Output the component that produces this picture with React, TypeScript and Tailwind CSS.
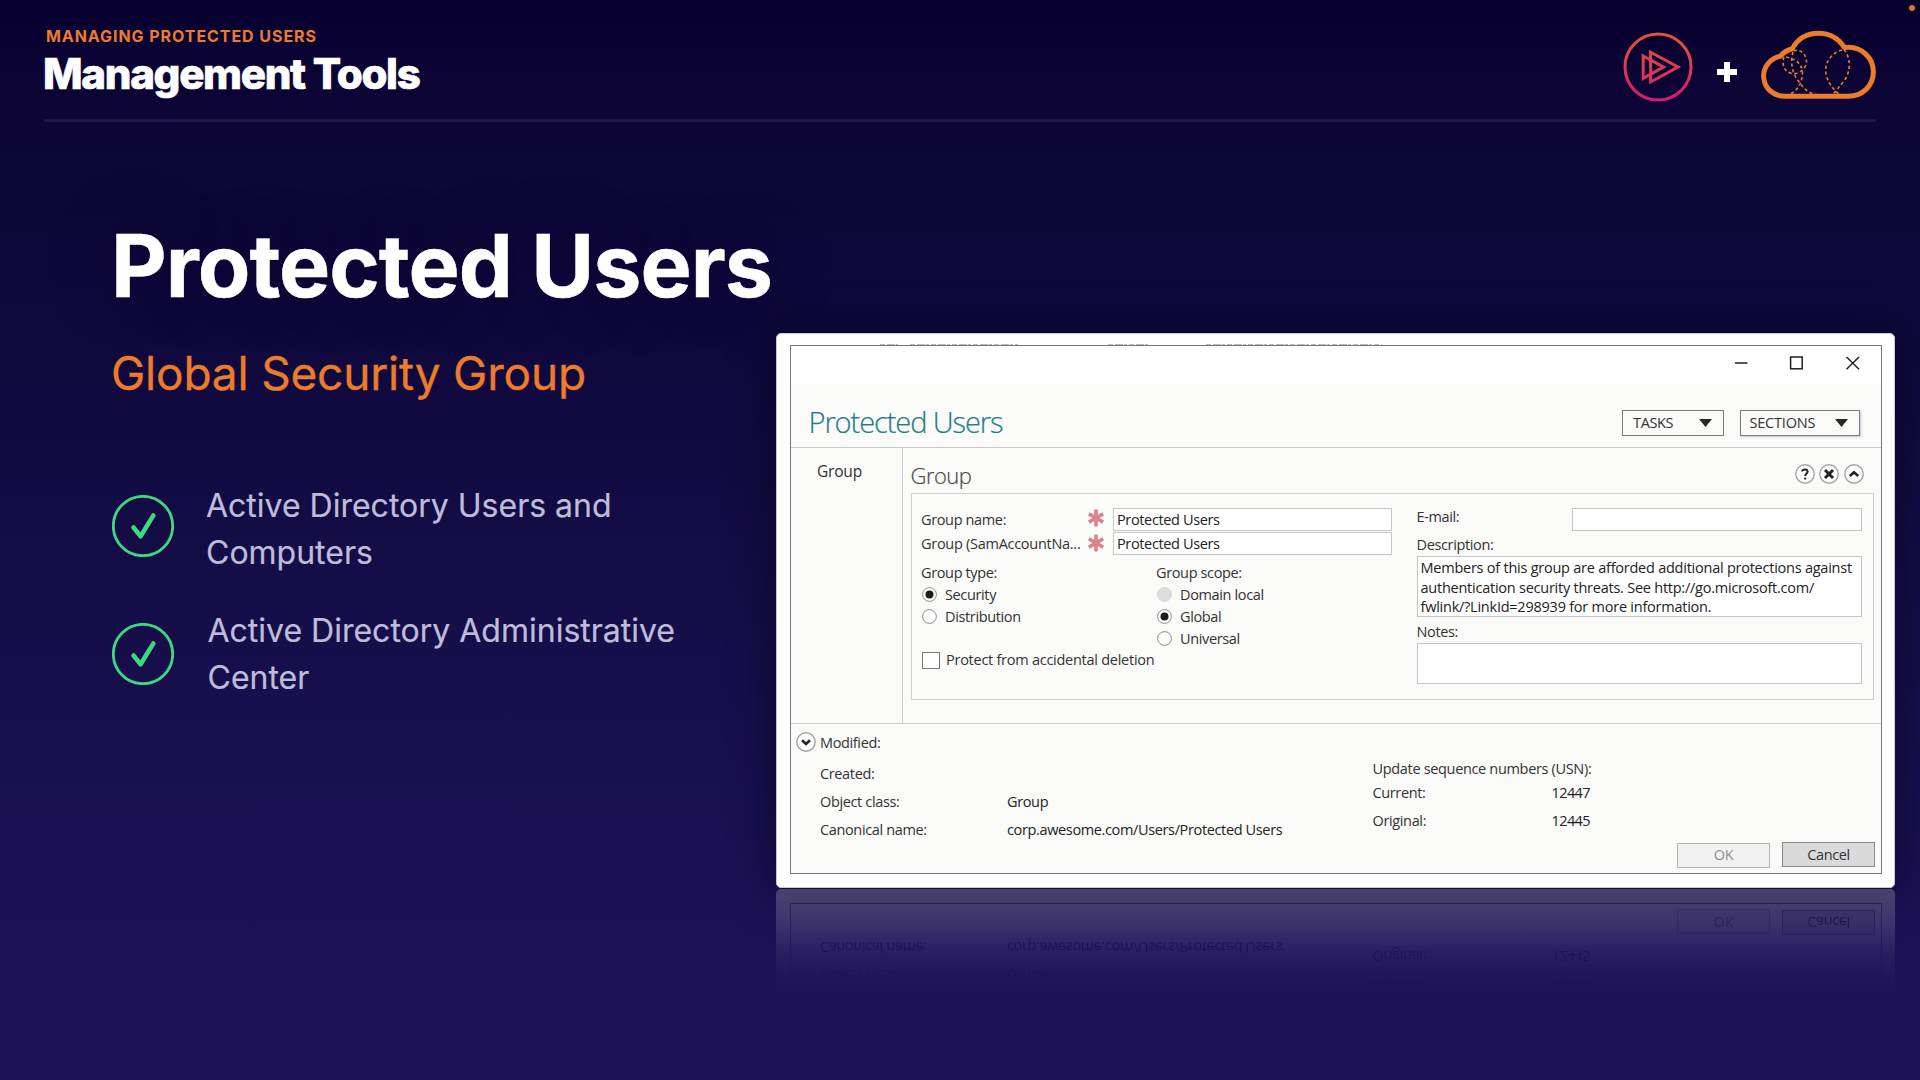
import type { ReactNode } from "react";

function PlayLogo() {
  return (
    <svg className="h-[70px] w-[70px]" viewBox="0 0 70 70" fill="none">
      <defs>
        <linearGradient id="ring" x1="0" y1="0" x2="0" y2="70" gradientUnits="userSpaceOnUse">
          <stop offset="0" stopColor="#e8533a" />
          <stop offset="0.5" stopColor="#dd3b50" />
          <stop offset="1" stopColor="#cf1a74" />
        </linearGradient>
      </defs>
      <g stroke="url(#ring)">
        <circle cx="35" cy="35" r="33" strokeWidth="3" />
        <path d="M27.6 20.2 55 35 27.6 50Z" strokeWidth="3" />
        <path d="M20.2 24 40.6 35 20.2 46.4Z" strokeWidth="3" />
      </g>
    </svg>
  );
}

function CloudLogo() {
  return (
    <svg className="h-[70px] w-[118px]" viewBox="0 0 118 70" fill="none" stroke="#ea7c2c">
      <path
        d="M24.5 66.2 H88 C102.5 66.2 113.4 56 113.4 41.8 C113.4 28 102 17.3 88.5 17.3 C87 17.3 85.8 17.4 84.5 17.6 C78.5 8.2 69 3.2 58.5 3.2 C47 3.2 37.5 8.8 32.3 18.8 C27.5 20 23.5 22.4 20.5 26.2 C10.5 28.2 3.6 36.5 3.6 45.8 C3.6 57.5 12.8 66.2 24.5 66.2Z"
        strokeWidth="5"
        strokeLinejoin="round"
      />
      <g strokeWidth="1.6" strokeDasharray="3.2 2.6">
        <path d="M24 27 C21.5 34 24 42 32 43.5 C41 44.5 48.5 36 46 28 C44 21.5 38 19 33 21" />
        <path d="M33 22 C30 32 32 44 40 53 C45 60 50 64 57 64.5" />
        <path d="M26 27 C36 29 42 34 42.5 43 C42 54 37 61 30 64" />
        <path d="M84 19.5 C91 28 91 42 84 51 C79 57 76 61 73 64.5" />
        <path d="M82 20 C71 23 63 34 66.5 46 C69 55 74 59 79 64.5" />
      </g>
    </svg>
  );
}

function CheckItem({ first, children }: { first?: boolean; children: ReactNode }) {
  return (
    <li className={first ? "flex h-[93px] items-start gap-[32px]" : "flex h-[93px] items-start gap-[33.5px]"}>
      <svg className={first ? "mt-[12px] h-[62px] w-[62px]" : "mt-[15px] h-[62px] w-[62px]"} viewBox="0 0 62 62" fill="none" stroke="#3dd880">
        <circle cx="31" cy="31" r="29.7" strokeWidth="2.8" />
        <path d="M21.5 32.5 28.6 41.2 41.4 20.4" strokeWidth="4.6" strokeLinecap="round" strokeLinejoin="round" />
      </svg>
      <p className="-mt-[1px] text-[32px] leading-[47px] text-[#bfbcdb] [-webkit-text-stroke:0.2px_#bfbcdb]">{children}</p>
    </li>
  );
}

function Radio({ label, state = "off" }: { label: string; state?: "on" | "off" | "disabled" }) {
  return (
    <div className="flex h-[22px] items-center gap-[8px] pl-px">
      <svg className="-mt-[1px] h-[15px] w-[15px]" viewBox="0 0 15 15">
        <circle cx="7.5" cy="7.5" r="6.9" fill={state === "disabled" ? "#dedede" : "#fff"} stroke={state === "disabled" ? "#d2d2d2" : "#8a8a8a"} />
        {state === "on" && <circle cx="7.5" cy="7.5" r="4" fill="#1c1c1c" />}
      </svg>
      <span className="leading-[22px]">{label}</span>
    </div>
  );
}

function NameRow({ label, className }: { label: string; className?: string }) {
  return (
    <div className="flex h-[24.5px] items-start">
      <span className="w-[167px] leading-[24px]">
        <span className={className}>{label}</span>
      </span>
      <svg className="mt-[1.5px] h-[18px] w-[16px]" viewBox="0 0 16 18" stroke="#dc8388" strokeWidth="3.6">
        <path d="M8 0.5V17.5M0.8 4.8 15.2 13.2M15.2 4.8 0.8 13.2" />
      </svg>
      <div className="ml-[9px] h-[23px] w-[279px] border border-[#c4c6c8] bg-white pl-[3px] leading-[22px] text-[#222]">Protected Users</div>
    </div>
  );
}

function RoundIcon({ children }: { children: ReactNode }) {
  return (
    <svg className="h-[20px] w-[20px]" viewBox="0 0 20 20" fill="none" stroke="#222" strokeWidth="2.6">
      <circle cx="10" cy="10" r="9.2" fill="#fcfcfc" stroke="#a3a3a3" strokeWidth="1.4" />
      {children}
    </svg>
  );
}

function DropButton({ label, className }: { label: string; className: string }) {
  return (
    <div className={className}>
      <span>{label}</span>
      <svg className="h-[8px] w-[13px]" viewBox="0 0 13 8">
        <path d="M0 0H13L6.5 8Z" fill="#262626" />
      </svg>
    </div>
  );
}

function DetailRow({ label, value }: { label: string; value?: string }) {
  return (
    <div className="flex h-[28.3px] leading-[28.3px]">
      <span className="w-[187px]">{label}</span>
      <span className="text-[#222]">{value}</span>
    </div>
  );
}

function DialogFooter() {
  return (
    <>
      <div className="flex h-[118px] shrink-0 pt-[8px] pl-[5px]">
        <div className="w-[577px]">
          <div className="flex h-[27.7px] items-start gap-[4.5px]">
            <RoundIcon>
              <path d="M6 8.2 10 12 14 8.2" />
            </RoundIcon>
            <span className="leading-[22px]">Modified:</span>
          </div>
          <div className="pl-[24.5px]">
            <DetailRow label="Created:" />
            <DetailRow label="Object class:" value="Group" />
            <DetailRow label="Canonical name:" value="corp.awesome.com/Users/Protected Users" />
          </div>
        </div>
        <div className="pt-[26px]">
          <div className="tracking-[-0.330px] leading-[22px]">Update sequence numbers (USN):</div>
          <div className="flex h-[28.3px] leading-[26px]">
            <span className="w-[179px]">Current:</span>
            <span className="tracking-[-0.600px] text-[#222]">12447</span>
          </div>
          <div className="flex leading-[26px]">
            <span className="w-[179px]">Original:</span>
            <span className="tracking-[-0.600px] text-[#222]">12445</span>
          </div>
        </div>
      </div>
      <div className="flex justify-end gap-[12px] pr-[5.5px]">
        <div className="mt-[1px] h-[25px] w-[93px] border border-[#b5b5b5] bg-[#f1f1f1] text-center leading-[21px] text-[#8f8f8f]">OK</div>
        <div className="h-[25px] w-[93px] border-[1.5px] border-[#8a8a8a] bg-[#dadada] text-center leading-[23px]">Cancel</div>
      </div>
    </>
  );
}

function Dialog() {
  return (
    <div className="h-[555px] w-[1119px] rounded-[5px] border border-[#c9c9d4] bg-white pt-[11px] pr-[12px] pb-[13px] pl-[13px] font-['Open_Sans',sans-serif] text-[14.5px] tracking-[-0.360px] whitespace-nowrap text-[#333]">
      <div className="relative flex h-[529px] flex-col border border-[#777] bg-[#fafaf9]">
        {/* Clipped remains of the window behind, along the top edge */}
        <svg className="absolute -top-[2px] left-[89px] h-[2px] w-[520px]" viewBox="0 0 520 2" stroke="#bbb" strokeDasharray="5 2 8 1 3 2">
          <path d="M0 0.5H18M30 0.5H138M228 0.5H270M326 0.5H502" />
        </svg>
        <div className="flex h-[38px] shrink-0 justify-end bg-white pt-[10px] pr-[21px]">
          <svg className="h-[14px] w-[126px]" viewBox="0 0 126 14" fill="none" stroke="#222" strokeWidth="1.5">
            <path d="M1 7H13.5" />
            <rect x="56.6" y="1" width="11.6" height="11.8" />
            <path d="M112.5 1 125 13.2M125 1 112.5 13.2" />
          </svg>
        </div>
        <div className="flex h-[64px] shrink-0 items-start border-b border-[#c9c9c9] pr-[21px] pl-[18px]">
          <h3 className="mt-[18px] flex-1 text-[29px] leading-[40px] font-light tracking-[-1.080px] text-[#1f7d88] [-webkit-text-stroke:0.2px_#1f7d88]">Protected Users</h3>
          <DropButton label="TASKS" className="mt-[26px] flex h-[26px] w-[102px] items-center justify-between border-[1.5px] border-[#7b7b7b] pr-[11px] pl-[10px] leading-[22px]" />
          <DropButton label="SECTIONS" className="mt-[26px] ml-[15.5px] flex h-[26px] w-[120px] items-center justify-between border-[1.5px] border-[#7b7b7b] pr-[11px] pl-[9px] leading-[22px] tracking-[-0.200px] shadow-[1px_1px_2px_#c4c4e0]" />
        </div>
        <div className="flex h-[276px] shrink-0 border-b border-[#c9c9c9]">
          <div className="w-[112px] shrink-0 border-r-[1.5px] border-[#cfcfcf] pt-[11.5px] pl-[26.5px] text-[15.5px] leading-[22px] tracking-[-0.200px]">Group</div>
          <div className="flex flex-1 flex-col pr-[7px] pl-[8px]">
            <div className="flex h-[45px] items-start justify-between pr-[10px]">
              <h4 className="mt-[6.5px] text-[22px] leading-[40px] font-light tracking-[-0.500px] text-[#444] [-webkit-text-stroke:0.2px_#666]">Group</h4>
              <div className="mt-[15.5px] flex gap-[4.5px]">
                <RoundIcon>
                  <path d="M7.2 7.5C7.3 4.8 12.6 4.8 12.6 7.7C12.6 9.5 10.2 9.7 10.2 12M10.2 13.6V15.6" strokeWidth="1.9" />
                </RoundIcon>
                <RoundIcon>
                  <path d="M6 6 14 14M14 6 6 14" strokeWidth="3" />
                </RoundIcon>
                <RoundIcon>
                  <path d="M5.8 12 10 8.2 14.2 12" />
                </RoundIcon>
              </div>
            </div>
            <div className="flex h-[207px] justify-between border-[1.5px] border-[#cdcdcd] pr-[11px] pl-[9.5px]">
              <div className="pt-[13.5px]">
                <NameRow label="Group name:" />
                <NameRow label="Group (SamAccountNa..." className="tracking-[-0.280px]" />
                <div className="mt-[5.5px] flex">
                  <div className="w-[235px]">
                    <div className="leading-[22px]">Group type:</div>
                    <Radio label="Security" state="on" />
                    <Radio label="Distribution" />
                  </div>
                  <div>
                    <div className="leading-[22px]">Group scope:</div>
                    <Radio label="Domain local" state="disabled" />
                    <Radio label="Global" state="on" />
                    <Radio label="Universal" />
                  </div>
                </div>
                <div className="-mt-[1px] flex h-[22px] items-center gap-[6px] pl-px tracking-[-0.260px]">
                  <span className="h-[17px] w-[18px] border-[1.5px] border-[#777] bg-white" />
                  <span className="leading-[22px]">Protect from accidental deletion</span>
                </div>
              </div>
              <div className="w-[445px] pt-[11.5px]">
                <div className="flex h-[28px] justify-between">
                  <span className="pt-[0.5px] leading-[22px]">E-mail:</span>
                  <span className="mt-[2px] h-[23px] w-[289.5px] border border-[#c4c6c8] bg-white" />
                </div>
                <div className="pt-[0.5px] leading-[22px]">Description:</div>
                <div className="h-[61px] border border-[#c4c6c8] bg-white pt-[1px] pl-[3px] leading-[19.6px] tracking-[-0.240px] text-[#222]">
                  Members of this group are afforded additional protections against
                  <br />
                  authentication security threats. See http://go.microsoft.com/
                  <br />
                  fwlink/?LinkId=298939 for more information.
                </div>
                <div className="mt-[4px] leading-[22px]">Notes:</div>
                <div className="h-[41px] border border-[#c4c6c8] bg-white" />
              </div>
            </div>
          </div>
        </div>
        <DialogFooter />
      </div>
    </div>
  );
}

function Reflection() {
  return (
    <div
      aria-hidden="true"
      className="mt-px h-[164px] opacity-22 [mask-image:linear-gradient(to_bottom,black,rgba(0,0,0,0.7)_20%,rgba(0,0,0,0.26)_38%,rgba(0,0,0,0.08)_52%,transparent_68%)]"
    >
      <div className="h-[164px] w-[1119px] -scale-y-100 rounded-b-[5px] bg-white pr-[13px] pb-[14px] pl-[14px] font-['Open_Sans',sans-serif] text-[14.5px] tracking-[-0.360px] whitespace-nowrap text-[#333]">
        <div className="h-[150px] border-x border-b border-[#777] bg-[#fafaf9]">
          <DialogFooter />
        </div>
      </div>
    </div>
  );
}

export default function App() {
  return (
    <main className="relative flex h-[1080px] w-[1920px] flex-col overflow-hidden bg-[linear-gradient(to_bottom,#07002f,#0c0536_10%,#110a40_38%,#170f4b_62%,#1d1258_88%,#1e1259)] font-['Inter',sans-serif]">
      <span className="absolute top-[5px] right-[5px] h-[6px] w-[6px] rounded-full bg-[#d9722c]" />
      <header className="flex h-[119px] shrink-0 items-start justify-between pr-[42px] pl-[45px]">
        <div className="pt-[26px]">
          <div className="pl-[1px] text-[16px] leading-[20px] font-bold tracking-[0.940px] text-[#ea7c2c]">MANAGING PROTECTED USERS</div>
          <h1 className="mt-[3.5px] -ml-[2px] text-[42px] leading-[48px] font-extrabold tracking-[-1.280px] text-white [-webkit-text-stroke:0.7px_white]">Management Tools</h1>
        </div>
        <div className="flex items-start">
          <div className="mt-[31.5px]">
            <PlayLogo />
          </div>
          <svg className="mt-[62px] ml-[24.5px] h-[20px] w-[20px]" viewBox="0 0 20 20" fill="#fff">
            <path d="M7 0H13V7H20V13H13V20H7V13H0V7H7Z" />
          </svg>
          <div className="mt-[30px] ml-[23px]">
            <CloudLogo />
          </div>
        </div>
      </header>
      <div className="mx-[44px] h-[3px] shrink-0 rounded-full bg-[#1e1747]" />
      <div className="flex flex-1 items-start">
        <section className="w-[775.5px] shrink-0 pt-[93.5px] pl-[112px] whitespace-nowrap">
          <h2 className="-ml-[1px] text-[86px] leading-[100px] font-bold tracking-[-1px] text-white [-webkit-text-stroke:0.5px_white] [text-shadow:0_0_70px_rgba(0,0,10,0.3)]">Protected Users</h2>
          <p className="mt-[29.5px] -ml-[1px] text-[46px] leading-[56px] tracking-[-0.200px] text-[#ea7c2c] [-webkit-text-stroke:0.3px_#ea7c2c]">Global Security Group</p>
          <ul className="mt-[82px] flex flex-col gap-[31.5px]">
            <CheckItem first>
              Active Directory Users and
              <br />
              Computers
            </CheckItem>
            <CheckItem>
              Active Directory Administrative
              <br />
              Center
            </CheckItem>
          </ul>
        </section>
        <section className="pt-[211px]">
          <div className="rounded-[5px] shadow-[0_0_40px_8px_rgba(0,0,20,0.45)]">
            <Dialog />
          </div>
          <Reflection />
        </section>
      </div>
    </main>
  );
}
